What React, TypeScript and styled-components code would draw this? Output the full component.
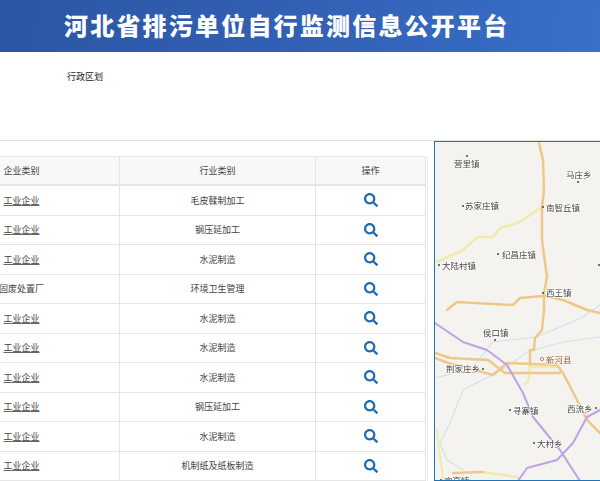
import { createGlobalStyle } from "styled-components";
import styled from "styled-components";
import { FaSearch } from "react-icons/fa";

const GlobalStyle = createGlobalStyle`
  html, body {
    margin: 0;
    padding: 0;
    height: 100%;
    overflow: hidden;
    background: #fff;
    font-family: "Liberation Sans", "Noto Sans CJK SC", sans-serif;
    color: #333;
  }
`;

const Header = styled.header`
  height: 52px;
  padding-left: 64px;
  background: linear-gradient(100deg, #2b56a3 0%, #3260b4 50%, #3870ca 100%);
  display: flex;
  align-items: center;
`;

const Title = styled.h1`
  margin: 0 0 2px;
  font-size: 24px;
  font-weight: 900;
  letter-spacing: 2.2px;
  line-height: 1;
  white-space: nowrap;
  color: #fff;
  font-family: "Noto Sans CJK SC", sans-serif;
`;

const Filter = styled.section`
  height: 89px;
  padding: 20px 0 0 67px;
  box-sizing: border-box;
  border-bottom: 1px solid #e2e2e2;
  font-size: 9px;
  line-height: 11px;
  color: #222;
`;

const Content = styled.main`
  display: flex;
  align-items: flex-start;
  height: 340px;
`;

const TableArea = styled.div`
  width: 428px;
  flex: none;
  box-sizing: border-box;
  margin: 15px 6px 0 0;
  border-right: 1px solid #eee;
  overflow: hidden;
`;

const Table = styled.div`
  width: 502px;
  margin-left: -76px;
  font-size: 9px;
`;

const Row = styled.div<{ $head?: boolean }>`
  display: grid;
  grid-template-columns: 196px 196px 110px;
  height: ${(p) => (p.$head ? "30px" : "29.5px")};
  box-sizing: border-box;
  border-top: ${(p) => (p.$head ? "1px solid #e8e8e8" : "0")};
  border-bottom: ${(p) => (p.$head ? "2px solid #e6e6e6" : "1px solid #e5e5e5")};
  background: ${(p) => (p.$head ? "#f8f8f8" : "#fff")};
`;

const Cell = styled.div`
  display: flex;
  align-items: center;
  justify-content: center;
  border-right: 1px solid #e5e5e5;
  white-space: nowrap;
  color: #444;
`;

const CompanyType = styled.a`
  color: #444;
  text-decoration: underline;
  text-decoration-thickness: 1px;
  text-decoration-color: #666;
`;

const SearchButton = styled.span`
  display: inline-flex;
  font-size: 14px;
  color: #1f6db0;
`;

const MapPanel = styled.div`
  flex: 1;
  height: 340px;
  box-sizing: border-box;
  border: 1px solid #1c75bc;
  border-right: 0;
  background: #f5f3ef;
  overflow: hidden;
`;

const MapSvg = styled.svg`
  display: block;
  width: 165px;
  height: 339px;
  filter: blur(0.3px);
`;

const Road = styled.polyline<{ $color: string; $w: number }>`
  fill: none;
  stroke: ${(p) => p.$color};
  stroke-width: ${(p) => p.$w};
  stroke-linejoin: round;
  stroke-linecap: round;
`;

const MapLabel = styled.text<{ $town?: boolean }>`
  font-family: "Noto Sans CJK SC", sans-serif;
  font-size: 8.5px;
  fill: ${(p) => (p.$town ? "#8a5a2b" : "#444")};
  paint-order: stroke;
  stroke: rgba(255, 255, 255, 0.8);
  stroke-width: 1.5px;
`;

const ORANGE = "#efc888";
const YELLOW = "#f1eaad";
const PURPLE = "#bda3e6";
const RIVER = "#d2e1ee";

const rows = [
  ["工业企业", "毛皮鞣制加工", true],
  ["工业企业", "钢压延加工", true],
  ["工业企业", "水泥制造", true],
  ["固废处置厂", "环境卫生管理", false],
  ["工业企业", "水泥制造", true],
  ["工业企业", "水泥制造", true],
  ["工业企业", "水泥制造", true],
  ["工业企业", "钢压延加工", true],
  ["工业企业", "水泥制造", true],
  ["工业企业", "机制纸及纸板制造", true],
] as const;

const roads: [string, string, number][] = [
  ["435,378 447,375 473,367 493,342 537,337 583,317 600,305", RIVER, 1.2],
  ["600,337 563,342 527,352 507,367 463,390 450,423 440,443 447,460 463,470", RIVER, 1.2],
  ["437,262 463,250 478,237 493,237 500,228 520,222 540,208", YELLOW, 2.5],
  ["437,430 440,457 443,478", YELLOW, 2],
  ["483,472 517,477 520,481", YELLOW, 2.5],
  ["530,366 528,382 524,384", YELLOW, 2.5],
  ["530,367 556,367", YELLOW, 2.5],
  ["539,143 543,160 544,190 542,207 542,240 547,277 544,293 544,310 542,330 535,338 534,350 530,350 530,365", ORANGE, 2.5],
  ["447,310 457,302 513,305 520,298 543,296", ORANGE, 2.5],
  ["545,296 563,300 587,310 600,313", ORANGE, 2.5],
  ["435,353 450,358 488,360 505,373 560,373", ORANGE, 2.5],
  ["435,358 448,363 482,372 493,375 507,363 557,365 563,373 577,400 587,420 600,433", ORANGE, 2.5],
  ["453,473 483,472", ORANGE, 2.5],
  ["435,323 463,342 487,350 507,365 523,393 533,417 560,450 580,481", PURPLE, 2],
  ["518,481 527,468 557,460 573,443 587,417 600,410", PURPLE, 2],
];

const labels: [string, number, number, boolean?][] = [
  ["营里镇", 454, 167],
  ["马庄乡", 566, 178],
  ["苏家庄镇", 465, 209],
  ["南智丘镇", 546, 211],
  ["纪昌庄镇", 502, 258],
  ["大陆村镇", 442, 269],
  ["西王镇", 546, 296],
  ["侯口镇", 483, 336],
  ["新河县", 546, 363, true],
  ["荆家庄乡", 446, 372],
  ["寻寨镇", 513, 414],
  ["西流乡", 567, 412],
  ["大村乡", 537, 447],
  ["宜亭镇", 444, 484],
];

const dots = [
  [467, 156],
  [578, 182],
  [463, 206],
  [543, 207],
  [498, 254],
  [439, 265],
  [543, 293],
  [599, 265],
  [495, 340],
  [483, 369],
  [510, 410],
  [596, 408],
  [534, 443],
  [441, 480],
];

function App() {
  return (
    <>
      <GlobalStyle />
      <Header>
        <Title>河北省排污单位自行监测信息公开平台</Title>
      </Header>
      <Filter>行政区划</Filter>
      <Content>
        <TableArea>
          <Table>
            <Row $head>
              <Cell>企业类别</Cell>
              <Cell>行业类别</Cell>
              <Cell>操作</Cell>
            </Row>
            {rows.map(([type, industry, linked], i) => (
              <Row key={i}>
                <Cell>{linked ? <CompanyType>{type}</CompanyType> : type}</Cell>
                <Cell>{industry}</Cell>
                <Cell>
                  <SearchButton>
                    <FaSearch />
                  </SearchButton>
                </Cell>
              </Row>
            ))}
          </Table>
        </TableArea>
        <MapPanel>
          <MapSvg viewBox="435 142 165 339">
            {roads.map(([points, color, w], i) => (
              <Road key={i} points={points} $color={color} $w={w} />
            ))}
            {dots.map(([cx, cy], i) => (
              <circle key={i} cx={cx} cy={cy} r={1} fill="#444" />
            ))}
            <circle cx={542} cy={359} r={1.6} fill="#fff" stroke="#8a5a2b" strokeWidth={0.7} />
            {labels.map(([text, x, y, town]) => (
              <MapLabel key={text} x={x} y={y} $town={town}>
                {text}
              </MapLabel>
            ))}
          </MapSvg>
        </MapPanel>
      </Content>
    </>
  );
}

export default App;
